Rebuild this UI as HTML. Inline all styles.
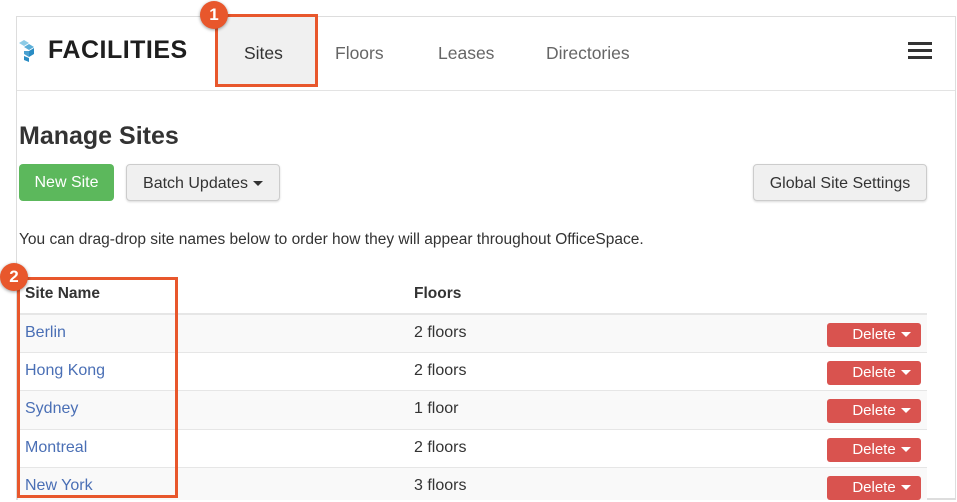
<!DOCTYPE html>
<html><head><style>
*{margin:0;padding:0;box-sizing:border-box}
body{width:957px;height:502px;background:#fff;font-family:"Liberation Sans",sans-serif;position:relative;overflow:hidden;color:#333}
.frame{position:absolute;left:16px;top:16px;width:940px;height:484px;border-left:1px solid #ddd;border-top:1px solid #ddd;border-right:1px solid #ddd;border-bottom:2px solid #ddd}
.hdr{position:absolute;left:17px;top:90px;width:938px;height:1px;background:#e3e3e3}
.logo{position:absolute;left:48px;top:36px;font-size:25px;font-weight:bold;color:#1e1e1e;letter-spacing:0.5px}
.nav{position:absolute;top:43px;font-size:17.5px;color:#666}
.sites{position:absolute;left:215px;top:17px;width:101px;height:69px;background:#f0f0f0}
.ham{position:absolute;left:908px;width:24px;height:3px;background:#333}
h1{position:absolute;left:19px;top:122px;font-size:25px;font-weight:bold;color:#333}
.btn{position:absolute;top:164px;height:37px;border-radius:4px;font-size:16px;line-height:37px;text-align:center}
.gray{background:#f0f0f0;border:1px solid #ccc;color:#333;box-shadow:0 1px 2px rgba(0,0,0,.15)}
.car{display:inline-block;width:0;height:0;border-left:5px solid transparent;border-right:5px solid transparent;border-top:5px solid #333;vertical-align:middle;margin-left:5px}
.p{position:absolute;left:19px;top:231px;font-size:15.5px;color:#333}
.th{position:absolute;top:285px;font-size:15.5px;font-weight:bold;color:#333}
.row{position:absolute;left:18px;width:909px;border-top:1px solid #e6e6e6}
.row span{position:absolute;top:9px;font-size:16px}
.nm{left:7px;color:#4a6fb5}
.fl{left:396px;color:#333}
.del{position:absolute;left:809px;top:8px;width:94px;height:24px;background:#d9534f;border-radius:3px;color:#fff;font-size:15px;line-height:24px;text-align:center}
.del .car{border-top-color:#fff}
.box{position:absolute;border:3px solid #e8572c}
.badge{position:absolute;width:28px;height:28px;border-radius:50%;background:#e8572c;color:#fff;font-weight:bold;font-size:17px;line-height:28px;text-align:center;box-shadow:0 1px 3px rgba(0,0,0,.4)}
</style></head><body>
<div class="frame"></div>
<div class="hdr"></div>
<svg style="position:absolute;left:19px;top:39px" width="18" height="23" viewBox="0 0 18 23">
<polygon points="0,4 5,1 10,4 5,7" fill="#8ccbe6"/>
<polygon points="5,8 10,5 15,8 10,11" fill="#5aaed8"/>
<polygon points="10,12 15,9 15,15 10,18" fill="#2a8cc4"/>
<polygon points="5,12 10,12 10,18 5,15" fill="#4aa0d0"/>
<polygon points="5,17 10,19 10,23 5,21" fill="#2a8cc4"/>
</svg>
<div class="logo">FACILITIES</div>
<div class="sites"></div>
<div class="nav" style="left:244px;color:#333">Sites</div>
<div class="nav" style="left:335px">Floors</div>
<div class="nav" style="left:438px">Leases</div>
<div class="nav" style="left:546px">Directories</div>
<div class="ham" style="top:42px"></div><div class="ham" style="top:49px"></div><div class="ham" style="top:56px"></div>
<h1>Manage Sites</h1>
<div class="btn" style="left:19px;width:95px;background:#5cb85c;color:#fff">New Site</div>
<div class="btn gray" style="left:126px;width:154px">Batch Updates<span class="car"></span></div>
<div class="btn gray" style="left:753px;width:174px">Global Site Settings</div>
<div class="p">You can drag-drop site names below to order how they will appear throughout OfficeSpace.</div>
<div class="th" style="left:25px">Site Name</div>
<div class="th" style="left:414px">Floors</div>
<div class="row" style="top:313px;height:39px;background:#f9f9f9;border-top:2px solid #e6e6e6"><span class="nm">Berlin</span><span class="fl">2 floors</span><div class="del">Delete<span class="car"></span></div></div>
<div class="row" style="top:352px;height:38px"><span class="nm">Hong Kong</span><span class="fl">2 floors</span><div class="del">Delete<span class="car"></span></div></div>
<div class="row" style="top:390px;height:39px;background:#f9f9f9"><span class="nm">Sydney</span><span class="fl">1 floor</span><div class="del">Delete<span class="car"></span></div></div>
<div class="row" style="top:429px;height:38px"><span class="nm">Montreal</span><span class="fl">2 floors</span><div class="del">Delete<span class="car"></span></div></div>
<div class="row" style="top:467px;height:33px;background:#f9f9f9"><span class="nm">New York</span><span class="fl">3 floors</span><div class="del">Delete<span class="car"></span></div></div>
<div class="box" style="left:215px;top:14px;width:103px;height:73px"></div>
<div class="badge" style="left:200px;top:1px">1</div>
<div class="box" style="left:17px;top:277px;width:161px;height:221px"></div>
<div class="badge" style="left:0px;top:263px">2</div>
</body></html>
